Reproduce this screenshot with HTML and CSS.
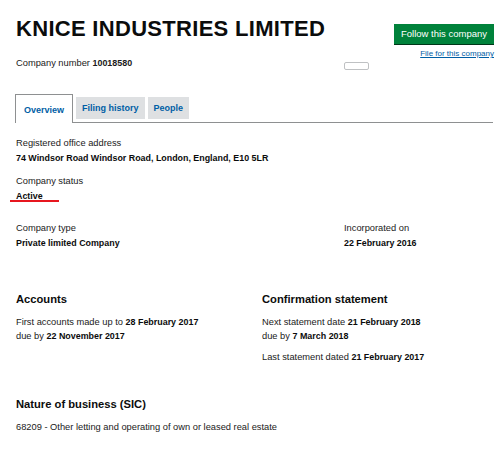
FILE: index.html
```html
<!DOCTYPE html>
<html>
<head>
<meta charset="utf-8">
<link rel="stylesheet" href="styles.css">
</head>
<body>
<div class="page">
  <header class="head">
    <div class="head-main">
      <h1 class="title">KNICE INDUSTRIES LIMITED</h1>
      <p class="number">Company number <strong>10018580</strong></p>
    </div>
    <div class="head-side">
      <a class="follow" href="#">Follow this company</a>
      <a class="file-link" href="#">File for this company</a>
      <span class="blank-box"></span>
    </div>
  </header>

  <nav class="tabs">
    <a class="tab active" href="#">Overview</a>
    <a class="tab" href="#">Filing history</a>
    <a class="tab" href="#">People</a>
  </nav>

  <section class="block first">
    <div class="label">Registered office address</div>
    <div class="value">74 Windsor Road Windsor Road, London, England, E10 5LR</div>
  </section>
  <section class="block">
    <div class="label">Company status</div>
    <div class="value status">Active</div>
  </section>

  <section class="grid two-type">
    <div>
      <div class="label">Company type</div>
      <div class="value">Private limited Company</div>
    </div>
    <div>
      <div class="label">Incorporated on</div>
      <div class="value">22 February 2016</div>
    </div>
  </section>

  <section class="grid two-acc">
    <div>
      <h2 class="heading">Accounts</h2>
      <p class="text">First accounts made up to <strong>28 February 2017</strong><br>due by <strong>22 November 2017</strong></p>
    </div>
    <div>
      <h2 class="heading">Confirmation statement</h2>
      <p class="text">Next statement date <strong>21 February 2018</strong><br>due by <strong>7 March 2018</strong></p>
      <p class="text last">Last statement dated <strong>21 February 2017</strong></p>
    </div>
  </section>

  <section class="sic">
    <h2 class="heading">Nature of business (SIC)</h2>
    <p class="text">68209 - Other letting and operating of own or leased real estate</p>
  </section>
</div>
</body>
</html>
```

FILE: styles.css
```css
* { box-sizing: border-box; }
html, body { margin: 0; padding: 0; background: #fff; }
body {
  font-family: "Liberation Sans", Arial, sans-serif;
  color: #0b0c0c;
}
strong { font-size: 0.96em; }
.page { padding: 0 6px 0 16px; width: 500px; }
.head { display: flex; justify-content: space-between; }
.head-main { padding-top: 15px; }
.title {
  margin: 0;
  font-size: 22px;
  line-height: 27px;
  font-weight: 700;
  letter-spacing: 0.3px;
}
.number { margin: 15px 0 0; font-size: 9.3px; line-height: 12px; color: #1a1a1a; }
.head-side {
  padding-top: 24px;
  display: flex;
  flex-direction: column;
  align-items: flex-end;
  position: relative;
}
.follow {
  display: block;
  width: 100px;
  height: 20px;
  line-height: 20px;
  text-align: center;
  background: #00823b;
  color: #fff;
  font-size: 9.5px;
  text-decoration: none;
  box-shadow: 0 1px 0 #003618;
}
.file-link {
  margin-top: 5px;
  font-size: 8px;
  line-height: 10px;
  color: #005ea5;
}
.blank-box {
  position: absolute;
  top: 62px;
  right: 125px;
  width: 25px;
  height: 8px;
  border: 1px solid #bfc1c3;
  border-radius: 2px;
}
.tabs {
  margin-top: 25px;
  display: flex;
  gap: 3px;
  border-bottom: 1px solid #8e9091;
  width: 478px;
  margin-left: -1px;
  align-items: flex-end;
  height: 29px;
}
.tab {
  display: block;
  font-size: 9px;
  font-weight: 700;
  color: #005ea5;
  text-decoration: none;
  background: #dee0e2;
  height: 22px;
  line-height: 22px;
  padding: 0 6px;
  margin-bottom: 3px;
}
.tab.active {
  background: #fff;
  border: 1px solid #8e9091;
  border-bottom: 0;
  height: 29px;
  line-height: 30px;
  margin-bottom: -1px;
  padding: 0 8px;
}
.block { margin-top: 11px; }
.block.first { margin-top: 14px; }
.label { font-size: 9.3px; line-height: 12px; color: #1a1a1a; }
.value { font-size: 8.9px; line-height: 12px; font-weight: 700; margin-top: 3px; }
.status { width: fit-content; position: relative; }
.status::after {
  content: "";
  position: absolute;
  left: -6px;
  right: -16px;
  bottom: 0;
  height: 2px;
  background: #e7171f;
}
.grid { display: grid; grid-template-columns: 328px 1fr; }
.two-type { margin-top: 20px; }
.two-acc { margin-top: 42px; grid-template-columns: 246px 1fr; }
.heading { margin: 0; font-size: 11.2px; line-height: 16px; font-weight: 700; }
.text { margin: 8px 0 0; font-size: 9.3px; line-height: 14px; color: #1a1a1a; }
.text strong { color: #0b0c0c; }
.text.last { margin-top: 7px; }
.sic { margin-top: 32px; }
```
